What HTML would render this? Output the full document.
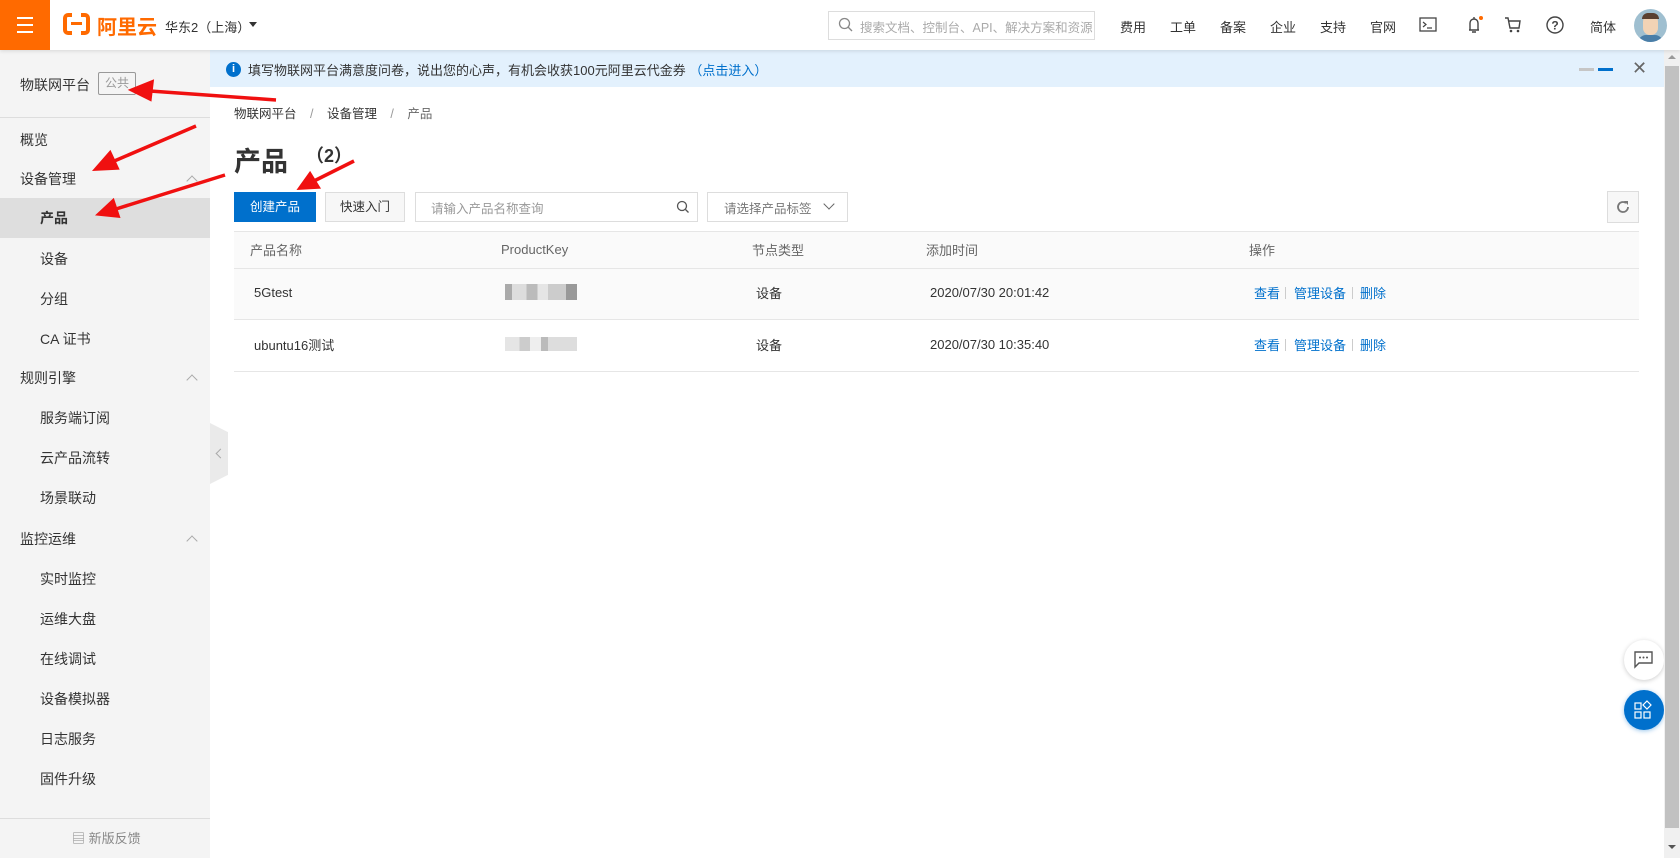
<!DOCTYPE html>
<html><head><meta charset="utf-8"><style>
*{box-sizing:border-box;margin:0;padding:0}
body{width:1680px;height:858px;overflow:hidden;background:#fff;font-family:"Liberation Sans","Noto Sans CJK SC",sans-serif;color:#333;position:relative;font-size:13px}
.abs{position:absolute}
.top{left:0;top:0;width:1680px;height:50px;background:#fff;box-shadow:0 1px 4px rgba(0,0,0,.12);z-index:5}
.ham{left:0;top:0;width:50px;height:50px;background:#ff6a00}
.ham i{position:absolute;left:17px;width:16px;height:2px;background:#fff}
.nav{top:17px;font-size:13px;color:#333}
.side{left:0;top:50px;width:210px;height:808px;background:#f4f4f4}
.si{position:absolute;left:20px;font-size:14px;color:#333}
.sub{left:40px}
.chev{position:absolute;left:188px;width:8px;height:8px;border-left:1px solid #aaa;border-top:1px solid #aaa;transform:rotate(45deg)}
.th{position:absolute;top:240px;color:#666;font-size:13px}
.td{position:absolute;font-size:13px;color:#333}
.lk{position:absolute;color:#0070cc;font-size:13px}
</style></head><body>
<div class="abs top">
 <div class="abs ham"><i style="top:17px"></i><i style="top:24px"></i><i style="top:31px"></i></div>
 <div class="abs" style="left:63px;top:13px;width:27px;height:22px;border:4px solid #ff6a00;border-radius:5px"></div>
 <div class="abs" style="left:72px;top:10px;width:9px;height:28px;background:#fff"></div>
 <div class="abs" style="left:71px;top:22px;width:11px;height:3px;background:#ff6a00"></div>
 <div class="abs" style="left:97px;top:11px;font-size:20px;font-weight:bold;color:#ff6a00">阿里云</div>
 <div class="abs" style="left:165px;top:17px;font-size:13px">华东2（上海）</div>
 <div class="abs" style="left:249px;top:22px;border:4px solid transparent;border-top:5px solid #333"></div>
 <div class="abs" style="left:828px;top:11px;width:267px;height:29px;border:1px solid #ddd"></div>
 <svg class="abs" style="left:838px;top:17px" width="16" height="16"><circle cx="6.5" cy="6.5" r="5" fill="none" stroke="#888" stroke-width="1.3"/><path d="M10 10l4 4" stroke="#888" stroke-width="1.3"/></svg>
 <div class="abs" style="left:860px;top:17px;font-size:12.5px;color:#aaa">搜索文档、控制台、API、解决方案和资源</div>
 <div class="abs nav" style="left:1120px">费用</div>
 <div class="abs nav" style="left:1170px">工单</div>
 <div class="abs nav" style="left:1220px">备案</div>
 <div class="abs nav" style="left:1270px">企业</div>
 <div class="abs nav" style="left:1320px">支持</div>
 <div class="abs nav" style="left:1370px">官网</div>
 <svg class="abs" style="left:1419px;top:17px" width="18" height="16"><rect x="1" y="1" width="16" height="13" fill="none" stroke="#444" stroke-width="1.3"/><path d="M4 5l3 2.5-3 2.5M8 11h5" stroke="#444" stroke-width="1.2" fill="none"/></svg>
 <svg class="abs" style="left:1464px;top:14px" width="22" height="22"><path d="M5 16h10M6 16V9a4 4 0 0 1 8 0v7M10 3v2M8 18h4" stroke="#444" stroke-width="1.4" fill="none"/><circle cx="17" cy="4" r="2" fill="#ff6a00"/></svg>
 <svg class="abs" style="left:1504px;top:16px" width="18" height="18"><path d="M1 2h3l2 10h9l1-7H5" stroke="#444" stroke-width="1.4" fill="none"/><circle cx="7" cy="15" r="1.3" fill="#444"/><circle cx="14" cy="15" r="1.3" fill="#444"/></svg>
 <svg class="abs" style="left:1545px;top:15px" width="20" height="20"><circle cx="10" cy="10" r="8" fill="none" stroke="#444" stroke-width="1.4"/><text x="10" y="14.5" font-size="12" text-anchor="middle" fill="#444" font-family="Liberation Sans" font-weight="bold">?</text></svg>
 <div class="abs nav" style="left:1590px">简体</div>
 <div class="abs" style="left:1634px;top:9px;width:33px;height:33px;border-radius:50%;background:#9fbfd0;overflow:hidden"><div class="abs" style="left:9px;top:6px;width:15px;height:20px;border-radius:7px;background:#f2d3b5"></div><div class="abs" style="left:8px;top:4px;width:17px;height:6px;border-radius:6px 6px 0 0;background:#5a4030"></div><div class="abs" style="left:4px;top:26px;width:25px;height:10px;border-radius:8px 8px 0 0;background:#4a7ea8"></div></div>
</div>

<div class="abs side">
 <div class="si" style="top:25px">物联网平台</div>
 <div class="abs" style="left:98px;top:22px;width:38px;height:23px;border:1px solid #999;border-radius:2px;color:#999;font-size:12px;text-align:center;line-height:21px">公共</div>
 <div class="abs" style="left:0;top:67px;width:210px;height:1px;background:#ddd"></div>
 <div class="si" style="top:80px">概览</div>
 <div class="si" style="top:119px">设备管理</div><div class="chev" style="top:127px"></div>
 <div class="abs" style="left:0;top:148px;width:210px;height:40px;background:#dedede"></div>
 <div class="si sub" style="top:158px;font-weight:bold">产品</div>
 <div class="si sub" style="top:199px">设备</div>
 <div class="si sub" style="top:239px">分组</div>
 <div class="si sub" style="top:279px">CA 证书</div>
 <div class="si" style="top:318px">规则引擎</div><div class="chev" style="top:326px"></div>
 <div class="si sub" style="top:358px">服务端订阅</div>
 <div class="si sub" style="top:398px">云产品流转</div>
 <div class="si sub" style="top:438px">场景联动</div>
 <div class="si" style="top:479px">监控运维</div><div class="chev" style="top:487px"></div>
 <div class="si sub" style="top:519px">实时监控</div>
 <div class="si sub" style="top:559px">运维大盘</div>
 <div class="si sub" style="top:599px">在线调试</div>
 <div class="si sub" style="top:639px">设备模拟器</div>
 <div class="si sub" style="top:679px">日志服务</div>
 <div class="si sub" style="top:719px">固件升级</div>
 <div class="abs" style="left:0;top:768px;width:210px;height:1px;background:#ddd"></div>
 <div class="abs" style="left:72px;top:778px;font-size:13px;color:#888">▤ 新版反馈</div>
</div>
<div class="abs" style="left:210px;top:423px;width:18px;height:61px;background:#eaeaea;clip-path:polygon(0 0,100% 15%,100% 85%,0 100%)"></div>
<div class="abs" style="left:217px;top:450px;width:7px;height:7px;border-left:1px solid #aaa;border-bottom:1px solid #aaa;transform:rotate(45deg)"></div>

<div class="abs" style="left:210px;top:50px;width:1454px;height:37px;background:#e3f1fd"></div>
<div class="abs" style="left:226px;top:62px;width:15px;height:15px;border-radius:50%;background:#0070cc;color:#fff;font-size:11px;font-weight:bold;text-align:center;line-height:15px">i</div>
<div class="abs" style="left:248px;top:60px;font-size:13px;color:#333">填写物联网平台满意度问卷，说出您的心声，有机会收获100元阿里云代金券 <span style="color:#0070cc">（点击进入）</span></div>
<div class="abs" style="left:1579px;top:68px;width:15px;height:3px;background:#c6c6c6"></div>
<div class="abs" style="left:1598px;top:68px;width:15px;height:3px;background:#0070cc"></div>
<div class="abs" style="left:1632px;top:58px;font-size:18px;color:#666">✕</div>

<div class="abs" style="left:234px;top:103px;font-size:12.5px;color:#333">物联网平台 <span style="color:#999;margin:0 10px">/</span> 设备管理 <span style="color:#999;margin:0 10px">/</span> <span style="color:#666">产品</span></div>
<div class="abs" style="left:234px;top:140px;font-size:27px;font-weight:bold;color:#333">产品</div>
<div class="abs" style="left:306px;top:142px;font-size:18px;font-weight:bold;color:#333">（2）</div>

<div class="abs" style="left:234px;top:192px;width:82px;height:30px;background:#0070cc;color:#fff;font-size:12.5px;text-align:center;line-height:30px">创建产品</div>
<div class="abs" style="left:325px;top:192px;width:80px;height:30px;border:1px solid #ddd;background:#f7f7f7;font-size:12.5px;text-align:center;line-height:28px">快速入门</div>
<div class="abs" style="left:415px;top:192px;width:283px;height:30px;border:1px solid #ddd"></div>
<div class="abs" style="left:431px;top:198px;font-size:12.5px;color:#999">请输入产品名称查询</div>
<svg class="abs" style="left:676px;top:200px" width="14" height="14"><circle cx="6" cy="6" r="4.5" fill="none" stroke="#555" stroke-width="1.3"/><path d="M9.5 9.5l3 3" stroke="#555" stroke-width="1.3"/></svg>
<div class="abs" style="left:707px;top:192px;width:141px;height:30px;border:1px solid #ddd"></div>
<div class="abs" style="left:724px;top:198px;font-size:12.5px;color:#777">请选择产品标签</div>
<div class="abs" style="left:825px;top:200px;width:8px;height:8px;border-right:1.5px solid #666;border-bottom:1.5px solid #666;transform:rotate(45deg)"></div>
<div class="abs" style="left:1607px;top:191px;width:32px;height:32px;border:1px solid #ddd;background:#f7f7f7"></div>
<svg class="abs" style="left:1615px;top:199px" width="16" height="16"><path d="M13 8a5 5 0 1 1-2-4" fill="none" stroke="#777" stroke-width="1.8"/><path d="M9 2l4 0 0 4z" fill="#777"/></svg>

<div class="abs" style="left:234px;top:231px;width:1405px;height:88px;background:#fafafa;border-top:1px solid #e6e6e6"></div>
<div class="abs" style="left:234px;top:268px;width:1405px;height:1px;background:#e6e6e6"></div>
<div class="abs" style="left:234px;top:319px;width:1405px;height:1px;background:#e6e6e6"></div>
<div class="abs" style="left:234px;top:371px;width:1405px;height:1px;background:#e6e6e6"></div>
<div class="th" style="left:250px">产品名称</div>
<div class="th" style="left:501px;top:242px">ProductKey</div>
<div class="th" style="left:752px">节点类型</div>
<div class="th" style="left:926px">添加时间</div>
<div class="th" style="left:1249px">操作</div>

<div class="td" style="left:254px;top:285px">5Gtest</div>
<div class="abs" style="left:505px;top:284px;width:72px;height:16px;background:linear-gradient(90deg,#aaa 0 10%,#ddd 10% 30%,#bbb 30% 45%,#e5e5e5 45% 60%,#ccc 60% 85%,#999 85%)"></div>
<div class="td" style="left:756px;top:283px">设备</div>
<div class="td" style="left:930px;top:285px">2020/07/30 20:01:42</div>
<div class="lk" style="left:1254px;top:283px">查看</div><div class="abs" style="left:1285px;top:287px;width:1px;height:12px;background:#ccc"></div>
<div class="lk" style="left:1294px;top:283px">管理设备</div><div class="abs" style="left:1352px;top:287px;width:1px;height:12px;background:#ccc"></div>
<div class="lk" style="left:1360px;top:283px">删除</div>

<div class="td" style="left:254px;top:335px">ubuntu16测试</div>
<div class="abs" style="left:505px;top:337px;width:72px;height:14px;background:linear-gradient(90deg,#e5e5e5 0 20%,#ccc 20% 35%,#eee 35% 50%,#bbb 50% 60%,#ddd 60% 100%)"></div>
<div class="td" style="left:756px;top:335px">设备</div>
<div class="td" style="left:930px;top:337px">2020/07/30 10:35:40</div>
<div class="lk" style="left:1254px;top:335px">查看</div><div class="abs" style="left:1285px;top:339px;width:1px;height:12px;background:#ccc"></div>
<div class="lk" style="left:1294px;top:335px">管理设备</div><div class="abs" style="left:1352px;top:339px;width:1px;height:12px;background:#ccc"></div>
<div class="lk" style="left:1360px;top:335px">删除</div>

<div class="abs" style="left:1624px;top:640px;width:40px;height:40px;border-radius:50%;background:#fff;box-shadow:0 1px 5px rgba(0,0,0,.2)"></div>
<svg class="abs" style="left:1634px;top:651px" width="20" height="18"><path d="M1 1h17v11H5l-4 4z" fill="none" stroke="#555" stroke-width="1.4"/><circle cx="6" cy="6.5" r="1" fill="#555"/><circle cx="9.5" cy="6.5" r="1" fill="#555"/><circle cx="13" cy="6.5" r="1" fill="#555"/></svg>
<div class="abs" style="left:1624px;top:690px;width:40px;height:40px;border-radius:50%;background:#0070cc;box-shadow:0 1px 5px rgba(0,112,204,.4)"></div>
<svg class="abs" style="left:1634px;top:700px" width="20" height="20"><rect x="1" y="3" width="6" height="6" fill="none" stroke="#fff" stroke-width="1.2"/><rect x="1" y="12" width="6" height="6" fill="none" stroke="#fff" stroke-width="1.2"/><rect x="10" y="12" width="6" height="6" fill="none" stroke="#fff" stroke-width="1.2"/><path d="M13 1l4 4-4 4-4-4z" fill="none" stroke="#fff" stroke-width="1.2"/></svg>

<div class="abs" style="left:1664px;top:50px;width:16px;height:808px;background:#f0f0f0"></div>
<div class="abs" style="left:1665px;top:66px;width:14px;height:762px;background:#c1c1c1"></div>
<div class="abs" style="left:1668px;top:55px;border:4px solid transparent;border-bottom:4px solid #999;border-top:0"></div>
<div class="abs" style="left:1668px;top:845px;border:4px solid transparent;border-top:4px solid #555;border-bottom:0"></div>

<svg class="abs" style="left:0;top:0;z-index:10" width="1680" height="858">
<g stroke="#f01010" stroke-width="3.5" fill="#f01010">
<line x1="276" y1="100" x2="150" y2="91"/><polygon points="132,90 152,82 150,99"/>
<line x1="196" y1="126" x2="112" y2="162"/><polygon points="96,169 110,153 117,168"/>
<line x1="225" y1="175" x2="116" y2="209"/><polygon points="99,214 113,201 118,216"/>
<line x1="354" y1="161" x2="314" y2="181"/><polygon points="300,188 310,174 318,187"/>
</g></svg>
</body></html>
